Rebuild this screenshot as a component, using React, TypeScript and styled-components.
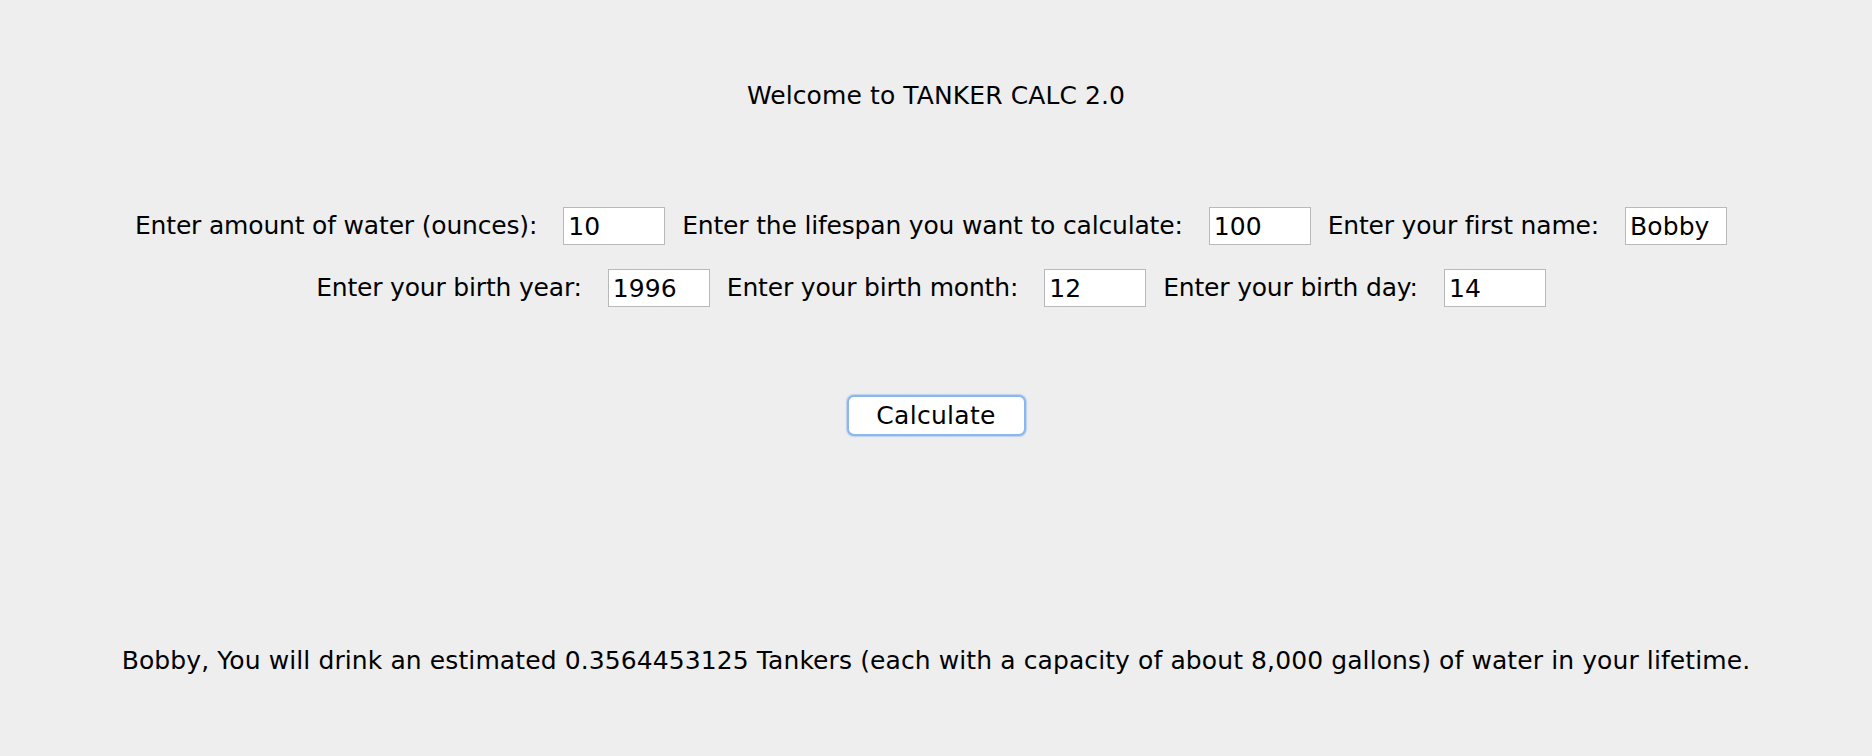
import React from "react";
import styled, { createGlobalStyle } from "styled-components";

const Global = createGlobalStyle`
  html, body { margin: 0; padding: 0; background: #eeeeee; }
  body { font-family: "DejaVu Sans", "Noto Sans", sans-serif; color: #000; }
`;

const Page = styled.div`
  width: 1872px;
  min-height: 756px;
  background: #eeeeee;
  display: flex;
  flex-direction: column;
  align-items: center;
  padding-top: 80px;
  box-sizing: border-box;
  font-family: "DejaVu Sans", "Noto Sans", sans-serif;
  font-size: 25px;
  letter-spacing: 0.1px;
`;

const Title = styled.div`
  line-height: 32px;
  margin-bottom: 95px;
`;

const Row = styled.div<{ $mb: number }>`
  display: flex;
  align-items: center;
  gap: 17px;
  padding-right: 10px;
  margin-bottom: ${(p) => p.$mb}px;
`;

const Pair = styled.label`
  display: flex;
  align-items: center;
  gap: 26px;
`;

const Label = styled.span`
  line-height: 32px;
  white-space: nowrap;
  letter-spacing: -0.18px;
`;

const Field = styled.input`
  width: 102px;
  height: 38px;
  box-sizing: border-box;
  border: 1px solid #b9b9b9;
  background: #ffffff;
  padding: 0 4px;
  margin: 0;
  font: inherit;
  letter-spacing: 0.1px;
  color: #000;
  outline: none;
`;

const Button = styled.button`
  width: 179px;
  height: 41px;
  box-sizing: border-box;
  border: 2px solid #8cb6ee;
  border-radius: 7px;
  background: #ffffff;
  box-shadow: 0 0 1px 1px rgba(140, 182, 238, 0.5);
  font: inherit;
  letter-spacing: 0.3px;
  color: #000;
  padding: 0;
  margin-bottom: 209px;
  cursor: pointer;
`;

const Result = styled.div`
  line-height: 32px;
  white-space: nowrap;
`;

type Item = { label: string; value: string };

const row1: Item[] = [
  { label: "Enter amount of water (ounces):", value: "10" },
  { label: "Enter the lifespan you want to calculate:", value: "100" },
  { label: "Enter your first name:", value: "Bobby" },
];

const row2: Item[] = [
  { label: "Enter your birth year:", value: "1996" },
  { label: "Enter your birth month:", value: "12" },
  { label: "Enter your birth day:", value: "14" },
];

export default function App() {
  return (
    <>
      <Global />
      <Page>
        <Title>Welcome to TANKER CALC 2.0</Title>
        <Row $mb={24}>
          {row1.map((it) => (
            <Pair key={it.label}>
              <Label>{it.label}</Label>
              <Field defaultValue={it.value} />
            </Pair>
          ))}
        </Row>
        <Row $mb={88}>
          {row2.map((it) => (
            <Pair key={it.label}>
              <Label>{it.label}</Label>
              <Field defaultValue={it.value} />
            </Pair>
          ))}
        </Row>
        <Button>Calculate</Button>
        <Result>
          Bobby, You will drink an estimated 0.3564453125 Tankers (each with a capacity of about 8,000 gallons) of water in your lifetime.
        </Result>
      </Page>
    </>
  );
}
